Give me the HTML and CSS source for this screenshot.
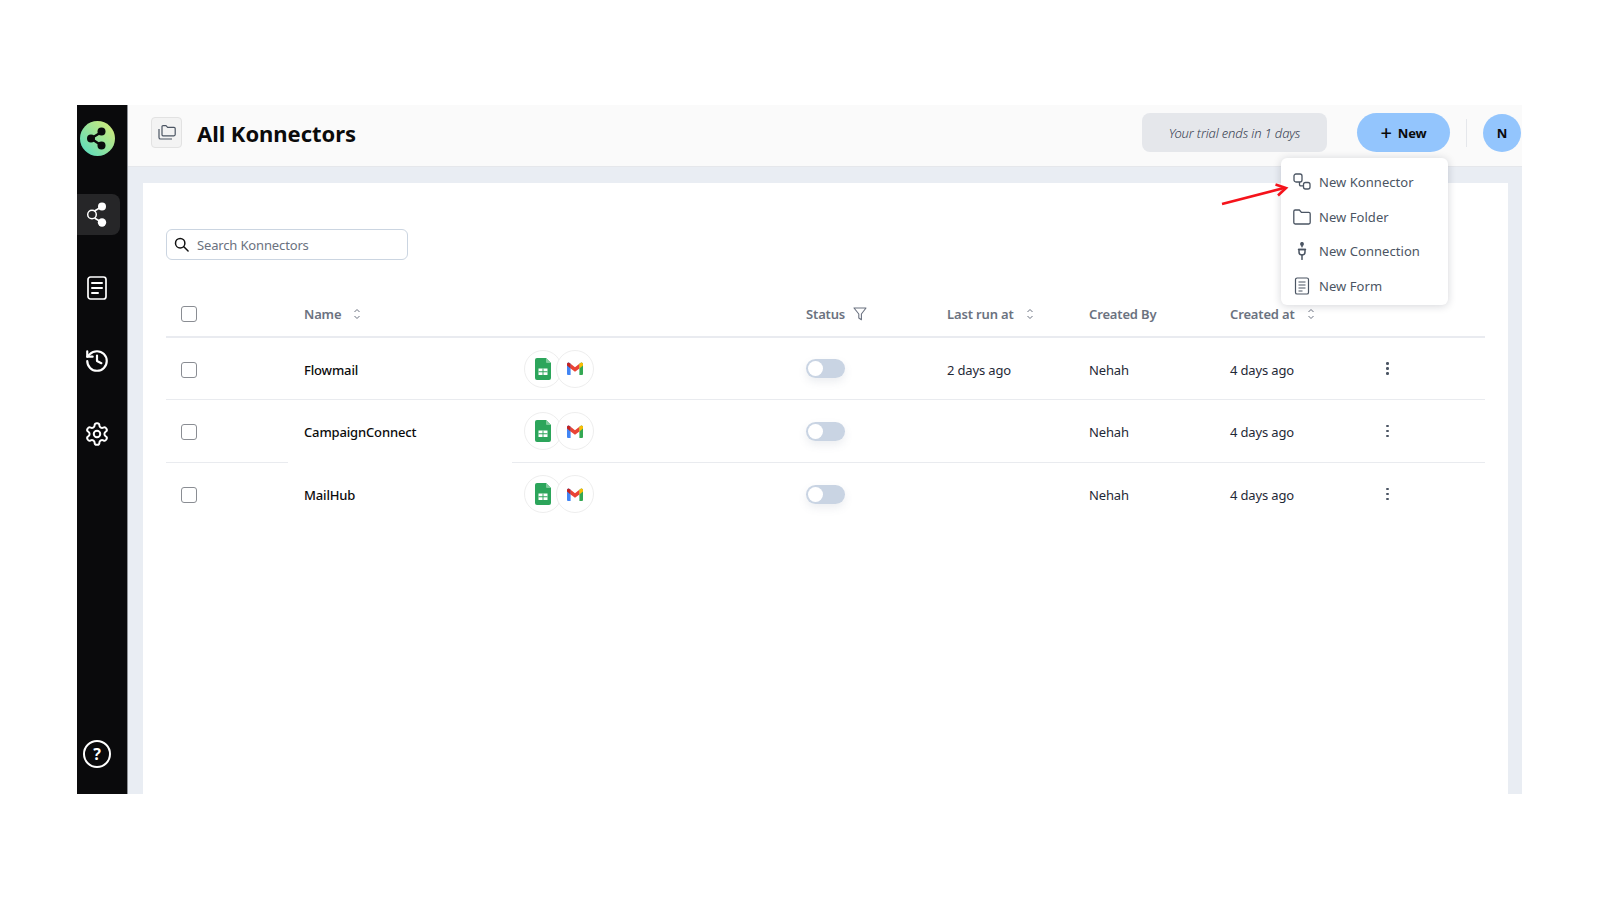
FILE: index.html
```html
<!DOCTYPE html>
<html lang="en">
<head>
<meta charset="utf-8">
<title>All Konnectors</title>
<link rel="stylesheet" href="styles.css">
</head>
<body>
<svg class="defs" width="0" height="0" aria-hidden="true">
  <symbol id="sheets" viewBox="0 0 16 22">
    <path d="M2 0h9l5 5v15a2 2 0 0 1-2 2H2a2 2 0 0 1-2-2V2a2 2 0 0 1 2-2z" fill="#2ca55b"/>
    <path d="M11 0l5 5h-4a1 1 0 0 1-1-1z" fill="#7fcb9b"/>
    <path d="M3.500 10.500h9v6.500h-9z" fill="#fff"/>
    <path d="M3.500 13.300h9v1h-9zM7.550 10.500h.9v6.500h-.9z" fill="#2ca55b"/>
  </symbol>
  <symbol id="gmail" viewBox="0 0 16 13">
    <path d="M0 2.400A1.600 1.600 0 0 1 2.600 1L3.600 1.800V13H1a1 1 0 0 1-1-1z" fill="#4285f4"/>
    <path d="M16 2.400A1.600 1.600 0 0 0 13.400 1l-1 .8V13H15a1 1 0 0 0 1-1z" fill="#34a853"/>
    <path d="M3.600 1.800L8 5.200l4.400-3.400v4.600L8 9.700 3.600 6.400z" fill="#ea4335"/>
    <path d="M12.400 1.800l1-.8A1.600 1.600 0 0 1 16 2.400v1.200l-3.600 2.800z" fill="#fbbc04"/>
    <path d="M0 2.400A1.600 1.600 0 0 1 2.600 1l1 .8v4.600L0 3.600z" fill="#c5221f"/>
  </symbol>
  <symbol id="sort" viewBox="0 0 8 12">
    <path d="M1.500 4L4 1.500 6.500 4M1.500 8L4 10.500 6.500 8" fill="none" stroke="#6b7280" stroke-width="1"/>
  </symbol>
</svg>

<div class="frame">
  <aside class="sidebar">
    <div class="logo">
      <svg viewBox="0 0 35 35" width="35" height="35">
        <defs><linearGradient id="lg" x1="0" y1="1" x2="1" y2="0"><stop offset="0" stop-color="#4fdcc6"/><stop offset="1" stop-color="#dcea72"/></linearGradient></defs>
        <circle cx="17.500" cy="17.500" r="17.500" fill="url(#lg)"/>
        <path d="M11 17.500L21.500 11M11 17.500L21.500 24.500" stroke="#0a0a0c" stroke-width="2.400" fill="none"/>
        <circle cx="11" cy="17.500" r="4" fill="#0a0a0c"/><circle cx="21.500" cy="10.500" r="4" fill="#0a0a0c"/><circle cx="21.500" cy="24.500" r="4" fill="#0a0a0c"/>
      </svg>
    </div>
    <nav class="nav">
      <div class="nav-item active">
        <svg viewBox="0 0 24 26" width="24" height="26" fill="none" stroke="#fff" stroke-width="1.500">
          <path d="M9.500 9L14.500 6M9.500 16L14.500 19"/>
          <circle cx="7" cy="12.500" r="4.300"/>
          <circle cx="17" cy="4.500" r="4" fill="#fff" stroke="none"/><circle cx="17" cy="20.500" r="4.200" fill="#fff" stroke="none"/>
        </svg>
      </div>
      <div class="nav-item">
        <svg viewBox="0 0 20 24" width="20" height="24" fill="none" stroke="#fff" stroke-width="1.700" stroke-linecap="round">
          <rect x="1" y="1" width="18" height="22" rx="2.500"/>
          <path d="M5 7h10M5 12h10M5 17h6" stroke-width="2"/>
        </svg>
      </div>
      <div class="nav-item">
        <svg viewBox="0 0 24 24" width="26" height="26" fill="none" stroke="#fff" stroke-width="2" stroke-linecap="round" stroke-linejoin="round">
          <path d="M3 12a9 9 0 1 0 9-9 9.750 9.750 0 0 0-6.740 2.740L3 8"/><path d="M3 3v5h5"/><path d="M12 7v5l4 2"/>
        </svg>
      </div>
      <div class="nav-item">
        <svg viewBox="0 0 24 24" width="26" height="26" fill="none" stroke="#fff" stroke-width="1.800" stroke-linecap="round" stroke-linejoin="round">
          <path d="M12.220 2h-.44a2 2 0 0 0-2 2v.18a2 2 0 0 1-1 1.730l-.43.25a2 2 0 0 1-2 0l-.15-.08a2 2 0 0 0-2.730.73l-.22.38a2 2 0 0 0 .73 2.730l.15.1a2 2 0 0 1 1 1.720v.51a2 2 0 0 1-1 1.740l-.15.09a2 2 0 0 0-.73 2.730l.22.38a2 2 0 0 0 2.730.73l.15-.08a2 2 0 0 1 2 0l.43.25a2 2 0 0 1 1 1.730V20a2 2 0 0 0 2 2h.44a2 2 0 0 0 2-2v-.18a2 2 0 0 1 1-1.730l.43-.25a2 2 0 0 1 2 0l.15.08a2 2 0 0 0 2.730-.73l.22-.39a2 2 0 0 0-.73-2.730l-.15-.08a2 2 0 0 1-1-1.740v-.5a2 2 0 0 1 1-1.740l.15-.09a2 2 0 0 0 .73-2.730l-.22-.38a2 2 0 0 0-2.730-.73l-.15.08a2 2 0 0 1-2 0l-.43-.25a2 2 0 0 1-1-1.730V4a2 2 0 0 0-2-2z"/>
          <circle cx="12" cy="12" r="3"/>
        </svg>
      </div>
    </nav>
    <div class="help">?</div>
  </aside>

  <div class="main">
    <header class="topbar">
      <div class="folder-btn">
        <svg viewBox="0 0 20 18" width="20" height="18" fill="none" stroke="#4b5563" stroke-width="1.200" stroke-linejoin="round">
          <path d="M5 4V2.600A1 1 0 0 1 6 1.600h3l1.600 1.800H17a1.200 1.200 0 0 1 1.200 1.200v6a1.200 1.200 0 0 1-1.200 1.200H6a1 1 0 0 1-1-1z"/>
          <path d="M2 5v8.400a1.600 1.600 0 0 0 1.600 1.600H15"/>
        </svg>
      </div>
      <h1 class="title">All Konnectors</h1>
      <div class="trial">Your trial ends in 1 days</div>
      <button class="new-btn"><span class="plus">+</span>New</button>
      <span class="divider"></span>
      <div class="avatar">N</div>
    </header>
    <section class="panel">
      <div class="search">
        <svg viewBox="0 0 16 16" width="15" height="15" fill="none" stroke="#111" stroke-width="1.600" stroke-linecap="round">
          <circle cx="6.600" cy="6.600" r="5"/><path d="M10.500 10.500L15 15"/>
        </svg>
        <span>Search Konnectors</span>
      </div>
      <div class="table">
        <div class="row head">
          <div class="cell"><span class="check"></span></div>
          <div class="cell">Name<svg class="sort" width="8" height="12"><use href="#sort"/></svg></div>
          <div class="cell"></div>
          <div class="cell">Status
            <svg class="filter" viewBox="0 0 14 14" width="14" height="14" fill="none" stroke="#6b7280" stroke-width="1.100" stroke-linejoin="round"><path d="M1 1h12L8.400 7v5.800L5.800 11V7z"/></svg>
          </div>
          <div class="cell">Last run at<svg class="sort" width="8" height="12"><use href="#sort"/></svg></div>
          <div class="cell">Created By</div>
          <div class="cell">Created at<svg class="sort" width="8" height="12"><use href="#sort"/></svg></div>
          <div class="cell"></div>
        </div>

        <div class="row">
          <div class="cell text"><span class="check"></span></div>
          <div class="cell text name">Flowmail</div>
          <div class="cell apps">
            <span class="app"><svg width="16" height="22"><use href="#sheets"/></svg></span>
            <span class="app"><svg width="16" height="13"><use href="#gmail"/></svg></span>
          </div>
          <div class="cell"><span class="toggle"></span></div>
          <div class="cell text">2 days ago</div>
          <div class="cell text">Nehah</div>
          <div class="cell text">4 days ago</div>
          <div class="cell"><span class="dots"><i></i><i></i><i></i></span></div>
        </div>

        <div class="row gap">
          <div class="cell text"><span class="check"></span></div>
          <div class="cell text name">CampaignConnect</div>
          <div class="cell apps">
            <span class="app"><svg width="16" height="22"><use href="#sheets"/></svg></span>
            <span class="app"><svg width="16" height="13"><use href="#gmail"/></svg></span>
          </div>
          <div class="cell"><span class="toggle"></span></div>
          <div class="cell text"></div>
          <div class="cell text">Nehah</div>
          <div class="cell text">4 days ago</div>
          <div class="cell"><span class="dots"><i></i><i></i><i></i></span></div>
        </div>

        <div class="row last">
          <div class="cell text"><span class="check"></span></div>
          <div class="cell text name">MailHub</div>
          <div class="cell apps">
            <span class="app"><svg width="16" height="22"><use href="#sheets"/></svg></span>
            <span class="app"><svg width="16" height="13"><use href="#gmail"/></svg></span>
          </div>
          <div class="cell"><span class="toggle"></span></div>
          <div class="cell text"></div>
          <div class="cell text">Nehah</div>
          <div class="cell text">4 days ago</div>
          <div class="cell"><span class="dots"><i></i><i></i><i></i></span></div>
        </div>
      </div>
    </section>
  </div>

  <div class="menu">
    <div class="menu-item">
      <svg viewBox="0 0 18 18" width="18" height="18" fill="none" stroke="#4b5563" stroke-width="1.300">
        <rect x="1" y="1" width="8" height="8" rx="2"/><rect x="10.500" y="9.500" width="6.500" height="6.500" rx="2"/>
        <path d="M6.500 9v2.600a1.200 1.200 0 0 0 1.200 1.200h2.800"/>
      </svg>New Konnector
    </div>
    <div class="menu-item">
      <svg viewBox="0 0 18 16" width="18" height="16" fill="none" stroke="#4b5563" stroke-width="1.300" stroke-linejoin="round">
        <path d="M.8 2.400A1.400 1.400 0 0 1 2.200 1h4.200l2 2.400h7.400a1.400 1.400 0 0 1 1.400 1.400v8.800a1.400 1.400 0 0 1-1.400 1.400H2.200a1.400 1.400 0 0 1-1.400-1.400z"/>
      </svg>New Folder
    </div>
    <div class="menu-item">
      <svg viewBox="0 0 18 18" width="18" height="18" fill="none" stroke="#4b5563" stroke-width="1.500">
        <path d="M9 .8v4M5.500 7.500h7M9 13v4.400" stroke-linecap="round"/>
        <path d="M6 7.500h6v2.400a3 3 0 0 1-6 0z"/>
        <circle cx="9" cy="2" r="1.200" fill="#4b5563"/>
      </svg>New Connection
    </div>
    <div class="menu-item">
      <svg viewBox="0 0 18 18" width="18" height="18" fill="none" stroke="#4b5563" stroke-width="1.200">
        <rect x="2.500" y="1" width="13" height="16" rx="1.600"/><path d="M5.500 5h7M5.500 8h7M5.500 11h7M5.500 14h4"/>
      </svg>New Form
    </div>
  </div>

  <svg class="arrow" viewBox="0 0 70 24" width="70" height="24" fill="none" stroke="#f5131b" stroke-width="2.600">
    <path d="M2 21L64 5"/><path d="M55.500 1.500L66 5 58 12.500"/>
  </svg>
</div>
</body>
</html>
```

FILE: styles.css
```css
* { box-sizing: border-box; }

html, body { margin: 0; height: 100%; background: #fff; }

body {
  padding: 105px 78px 106px 77px;
  font-family: "Noto Sans", "Liberation Sans", sans-serif;
  font-size: 13px;
  letter-spacing: -0.15px;
  color: #111827;
}

.defs { position: absolute; }

.frame {
  position: relative;
  display: flex;
  width: 1445px;
  height: 689px;
  overflow: hidden;
}

/* Sidebar */
.sidebar {
  flex: 0 0 51px;
  display: flex;
  flex-direction: column;
  align-items: flex-start;
  background: #0a0a0c;
  border-right: 1px solid #8d9096;
  padding: 16px 0 26px;
}

.logo { height: 35px; margin-left: 3px; }

.nav {
  display: flex;
  flex-direction: column;
  gap: 32px;
  margin-top: 38px;
}

.nav-item {
  display: flex;
  align-items: center;
  justify-content: center;
  width: 43px;
  height: 41px;
  padding-right: 3px;
}

.nav-item.active { background: #262628; border-radius: 0 8px 8px 0; }

.help {
  display: flex;
  align-items: center;
  justify-content: center;
  width: 28px;
  height: 28px;
  margin: auto 0 0 6px;
  border: 2px solid #fff;
  border-radius: 50%;
  color: #fff;
  font-size: 16px;
  font-weight: 700;
  line-height: 1;
}

/* Main */
.main {
  flex: 1;
  display: flex;
  flex-direction: column;
  min-width: 0;
  background: #e9edf3;
}

.topbar {
  display: flex;
  align-items: center;
  flex: 0 0 62px;
  padding: 0 1px 6px 23px;
  background: #fafafa;
  border-bottom: 1px solid #e5e7eb;
}

.folder-btn {
  display: flex;
  align-items: center;
  justify-content: center;
  width: 31px;
  height: 31px;
  background: #f3f3f3;
  border: 1px solid #e2e2e2;
  border-radius: 4px;
}

.title {
  margin: 0 0 0 15px;
  font-size: 22px;
  font-weight: 700;
  letter-spacing: -0.05px;
  line-height: 30px;
  color: #0b0b0b;
}

.trial {
  display: flex;
  align-items: center;
  justify-content: center;
  width: 185px;
  height: 39px;
  margin-left: auto;
  background: #e5e7eb;
  border-radius: 8px;
  font-size: 13px;
  font-style: italic;
  font-weight: 300;
  color: #374151;
}

.new-btn {
  display: flex;
  align-items: center;
  justify-content: center;
  width: 93px;
  height: 39px;
  margin-left: 30px;
  padding: 0;
  border: 0;
  border-radius: 20px;
  background: #93c5fd;
  font: 700 13px "Noto Sans", sans-serif;
  letter-spacing: -0.15px;
  color: #0b0b0b;
}

.plus { margin-right: 6px; font-size: 20px; font-weight: 500; line-height: 1; }

.divider {
  width: 1px;
  height: 28px;
  margin-left: 16px;
  background: #e5e7eb;
}

.avatar {
  display: flex;
  align-items: center;
  justify-content: center;
  width: 38px;
  height: 38px;
  margin-left: 16px;
  border-radius: 50%;
  background: #93c5fd;
  font-weight: 700;
  color: #0b0b0b;
}

/* Panel */
.panel {
  flex: 1;
  margin: 16px 14px 0 15px;
  padding: 46px 23px 0 23px;
  background: #fff;
}

.search {
  display: flex;
  align-items: center;
  gap: 8px;
  width: 242px;
  height: 31px;
  margin-bottom: 32px;
  padding-left: 7px;
  border: 1px solid #cbd5e1;
  border-radius: 6px;
  color: #6b7280;
}

.row {
  position: relative;
  display: grid;
  grid-template-columns: 138px 220px 282px 141px 142px 141px 156px 1fr;
  align-items: center;
  height: 62px;
  border-bottom: 1px solid #e9ebef;
}

.row.gap { height: 63px; }

.row.head {
  height: 46px;
  border-bottom: 2px solid #e9ebf0;
  font-weight: 600;
  color: #6b7280;
}

.row.last { border-bottom: 0; }

.row.gap::after {
  content: "";
  position: absolute;
  left: 122px;
  bottom: -1px;
  width: 224px;
  height: 1px;
  background: #fff;
}

.cell { display: flex; align-items: center; color: inherit; }
.cell.text { padding-top: 2px; }
.name { font-weight: 500; }
.row:not(.head) .cell { color: #1f2937; }
.row:not(.head) .name { color: #0b0b0b; }

.check {
  width: 16px;
  height: 16px;
  margin-left: 15px;
  border: 1.500px solid #8a8d93;
  border-radius: 3px;
  background: #fff;
}

.sort { margin-left: 12px; }
.filter { margin-left: 8px; }

.app {
  display: flex;
  align-items: center;
  justify-content: center;
  width: 38px;
  height: 38px;
  background: #fff;
  border: 1px solid #eeeeee;
  border-radius: 50%;
}

.app + .app { margin-left: -6px; }

.toggle {
  position: relative;
  width: 39px;
  height: 19px;
  border-radius: 10px;
  background: #c9d4e3;
  box-shadow: 0 4px 8px rgba(100, 116, 139, .12);
}

.toggle::after {
  content: "";
  position: absolute;
  left: 2px;
  top: 2px;
  width: 15px;
  height: 15px;
  border-radius: 50%;
  background: #fff;
}

.dots { display: flex; flex-direction: column; gap: 2.500px; }
.dots i { width: 2.500px; height: 2.500px; border-radius: 50%; background: #4b5563; }

/* Overlays */
.menu {
  position: absolute;
  left: 1204px;
  top: 53px;
  width: 167px;
  height: 147px;
  padding-top: 6.500px;
  background: #fff;
  border-radius: 6px;
  box-shadow: 0 1px 8px rgba(15, 23, 42, .18);
}

.menu-item {
  display: flex;
  align-items: center;
  gap: 8px;
  height: 34.700px;
  padding-left: 12px;
  letter-spacing: 0.05px;
  color: #4b5563;
}

.arrow {
  position: absolute;
  left: 1143px;
  top: 78px;
}
```
